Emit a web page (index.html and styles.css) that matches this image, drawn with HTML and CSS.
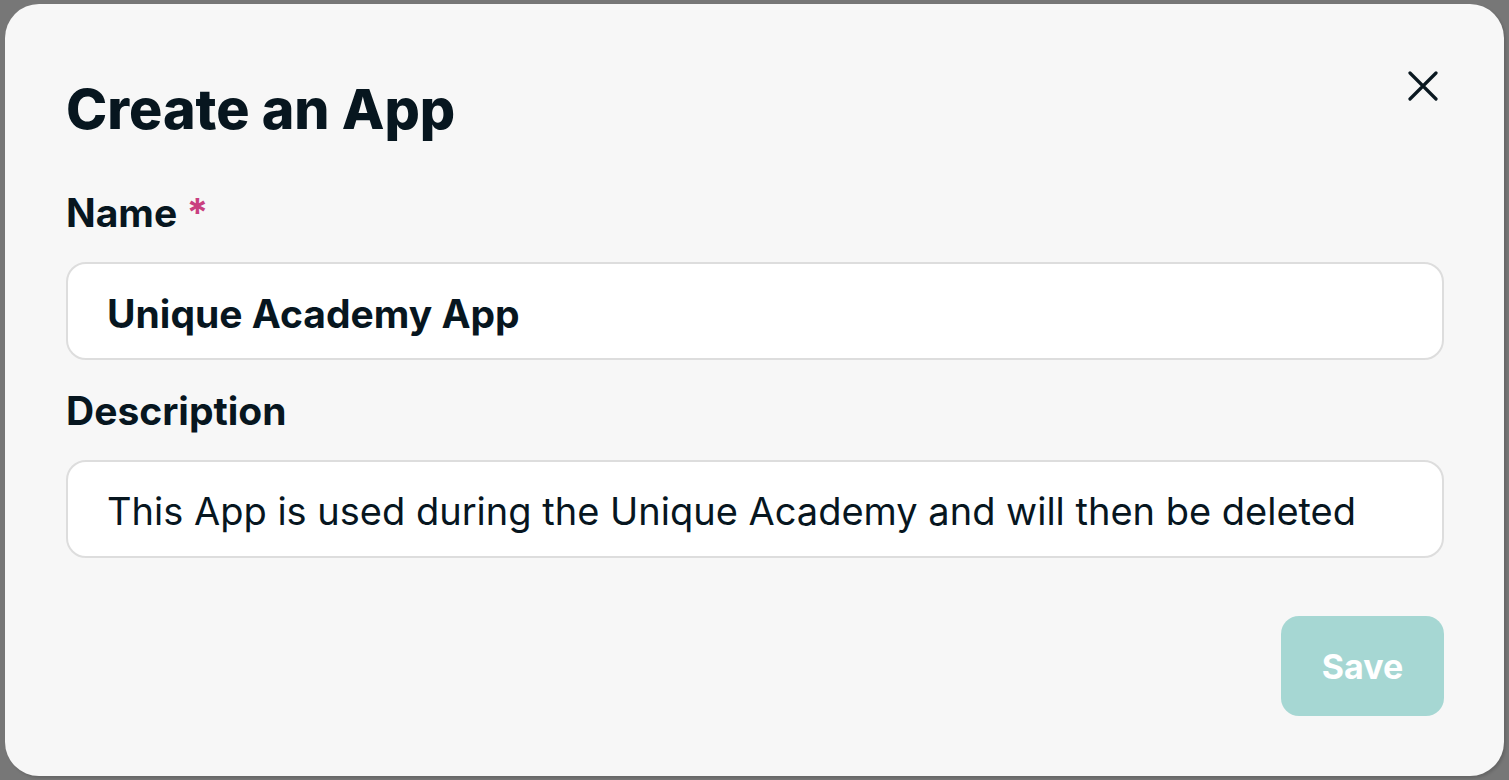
FILE: index.html
```html
<!DOCTYPE html>
<html lang="en">
<head>
  <meta charset="UTF-8" />
  <meta name="viewport" content="width=device-width, initial-scale=1.0"/>
  <title>Create an App</title>
  <link rel="stylesheet" href="styles.css">
</head>
<body>

  <div class="modal">
    <div class="modal-header">
      <h1>Create an App</h1>
      <button class="close-button" aria-label="Close">
        <svg width="30" height="30" viewBox="0 0 30 30">
          <path d="M2 2 L28 28 M28 2 L2 28" stroke="#0a1820" stroke-width="3.2" stroke-linecap="round" fill="none"/>
        </svg>
      </button>
    </div>

    <form class="app-form">
      <label for="app-name">Name <span class="required">*</span></label>
      <input id="app-name" class="name-input" type="text" value="Unique Academy App">

      <label for="app-description">Description</label>
      <input id="app-description" type="text" value="This App is used during the Unique Academy and will then be deleted">

      <div class="button-container">
        <button type="button" class="save-button" disabled>Save</button>
      </div>
    </form>
  </div>

</body>
</html>
```

FILE: styles.css
```css
body {
  font-family: Inter, 'Noto Sans', sans-serif;
  background: #777777;
  color: #07161f;
  margin: 0;
  height: 780px;
  overflow: hidden;
}

.modal {
  box-sizing: border-box;
  margin: 4px 5px;
  height: 772px;
  background: #f7f7f7;
  border-radius: 34px;
  padding: 71px 60px 60px 61px;
  box-shadow: 2px 2px 3px rgba(0, 0, 0, 0.15);
}

.modal-header {
  display: flex;
  justify-content: space-between;
  align-items: flex-start;
}

h1 {
  margin: 0;
  font-size: 55.5px;
  line-height: 67px;
  font-weight: 800;
}

.close-button {
  width: 44px;
  height: 44px;
  margin-top: -11px;
  margin-right: -1px;
  padding: 0;
  border: none;
  background: none;
  display: flex;
  align-items: center;
  justify-content: center;
  cursor: pointer;
}

.app-form {
  display: flex;
  flex-direction: column;
  margin-top: 48px;
}

label {
  font-size: 39px;
  line-height: 46px;
  font-weight: 700;
  margin-bottom: 26px;
}

.required {
  color: #c9407f;
}

input {
  box-sizing: border-box;
  height: 98px;
  border: 2px solid #dddddd;
  border-radius: 20px;
  background: white;
  padding: 4px 39px 0;
  font-family: inherit;
  font-size: 38px;
  color: #07161f;
  margin-bottom: 28px;
  outline: none;
}

.name-input {
  font-size: 39px;
  font-weight: 700;
}

.button-container {
  display: flex;
  justify-content: flex-end;
  margin-top: 30px;
}

.save-button {
  width: 163px;
  height: 100px;
  border: none;
  border-radius: 18px;
  background: #a6d7d3;
  color: white;
  font-family: inherit;
  font-size: 34px;
  font-weight: 700;
}
```
